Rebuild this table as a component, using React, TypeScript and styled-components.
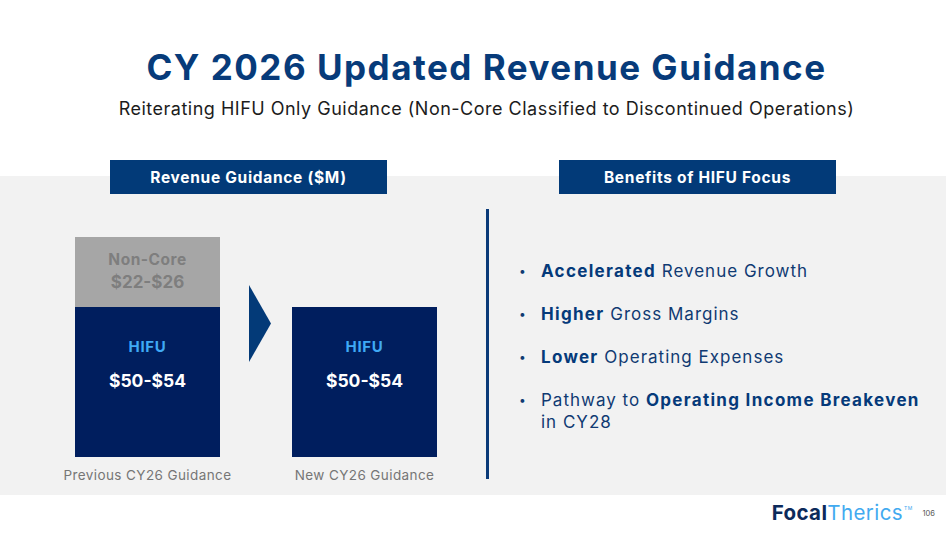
import React from "react";
import styled, { createGlobalStyle } from "styled-components";

const GlobalStyle = createGlobalStyle`
  html, body {
    margin: 0;
    padding: 0;
    background: #ffffff;
  }
  body {
    font-family: Inter, "Liberation Sans", sans-serif;
  }
`;

const Slide = styled.div`
  width: 946px;
  height: 535px;
  overflow: hidden;
  display: flex;
  flex-direction: column;
  background: #ffffff;
`;

const TitleBlock = styled.header`
  height: 160px;
  display: flex;
  flex-direction: column;
  align-items: center;
  padding-top: 45px;
  box-sizing: border-box;
`;

const Title = styled.h1`
  margin: 0 0 0 27px;
  font-size: 35px;
  line-height: 44px;
  font-weight: 700;
  color: #073b7a;
  letter-spacing: 1.5px;
`;

const Subtitle = styled.p`
  margin: 9px 0 0 27px;
  font-size: 18px;
  line-height: 22px;
  color: #1c1c1c;
  letter-spacing: 0.5px;
`;

const Content = styled.section`
  height: 335px;
  display: flex;
  flex-direction: column;
  background: linear-gradient(to bottom, #ffffff 16px, #f2f2f2 16px);
`;

const HeaderRow = styled.div`
  display: flex;
  height: 34px;
  padding-left: 110px;
  gap: 172px;
`;

const HeaderBox = styled.div`
  width: 277px;
  display: flex;
  align-items: center;
  justify-content: center;
  background: #023a78;
  color: #ffffff;
  font-weight: 700;
  font-size: 15.5px;
  letter-spacing: 0.7px;
`;

const Body = styled.div`
  flex: 1;
  display: flex;
`;

const ChartArea = styled.div`
  width: 486px;
  display: flex;
  padding: 43px 0 0 75px;
  box-sizing: border-box;
`;

const BarColumn = styled.div`
  width: 145px;
  display: flex;
  flex-direction: column;
  align-items: center;
`;

const Segment = styled.div<{ $h: number; $tone: "core" | "noncore" | "empty" }>`
  width: 100%;
  height: ${(p) => p.$h}px;
  display: flex;
  flex-direction: column;
  align-items: center;
  background: ${(p) =>
    p.$tone === "core" ? "#001e5e" : p.$tone === "noncore" ? "#a6a6a6" : "transparent"};
`;

const NonCoreName = styled.div`
  margin-top: 14px;
  font-size: 15.5px;
  line-height: 18px;
  font-weight: 700;
  color: #7e7e7e;
  letter-spacing: 0.5px;
`;

const NonCoreValue = styled.div`
  margin-top: 2px;
  font-size: 17px;
  line-height: 22px;
  font-weight: 700;
  color: #7e7e7e;
`;

const CoreName = styled.div`
  margin-top: 31px;
  font-size: 15px;
  line-height: 18px;
  font-weight: 700;
  color: #3fa9f5;
  letter-spacing: 0.7px;
`;

const CoreValue = styled.div`
  margin-top: 13px;
  font-size: 17.5px;
  line-height: 24px;
  font-weight: 700;
  color: #ffffff;
`;

const BarLabel = styled.div`
  margin-top: 9px;
  white-space: nowrap;
  font-size: 13.5px;
  line-height: 18px;
  color: #767676;
  letter-spacing: 0.4px;
`;

const Arrow = styled.svg`
  flex: none;
  margin: 48px 21px 0 29px;
`;

const Divider = styled.div`
  width: 3px;
  height: 270px;
  margin-top: 15px;
  background: #0a3a78;
`;

const BenefitList = styled.ul`
  list-style: none;
  margin: 0;
  padding: 66px 0 0 30px;
  display: flex;
  flex-direction: column;
  gap: 21px;
`;

const Benefit = styled.li`
  display: flex;
  font-size: 17px;
  line-height: 22px;
  color: #103a72;
  letter-spacing: 1px;
`;

const Dot = styled.span`
  width: 22px;
  flex: none;
  font-size: 12px;
  color: #103a72;
`;

const BenefitText = styled.p`
  margin: 0;
  width: 392px;
`;

const Strong = styled.b`
  font-weight: 700;
  color: #053a7a;
  letter-spacing: 1.3px;
`;

const Footer = styled.footer`
  flex: 1;
  display: flex;
  align-items: center;
  justify-content: flex-end;
  padding: 0 11px 4px 0;
`;

const Logo = styled.div`
  display: flex;
  align-items: flex-start;
  font-size: 20.5px;
  line-height: 24px;
  letter-spacing: 0.4px;
`;

const LogoBold = styled.span`
  font-weight: 700;
  color: #0c2a5b;
`;

const LogoLight = styled.span`
  font-weight: 400;
  color: #42aaf0;
`;

const Tm = styled.sup`
  font-size: 5px;
  line-height: 8px;
  color: #42aaf0;
  margin-left: 1px;
  margin-top: 3px;
`;

const PageNum = styled.span`
  margin-left: 10px;
  font-size: 7.5px;
  color: #555555;
`;

const bars = [
  { label: "Previous CY26 Guidance", nonCore: true },
  { label: "New CY26 Guidance", nonCore: false },
];

const benefits: React.ReactNode[] = [
  <>
    <Strong>Accelerated</Strong> Revenue Growth
  </>,
  <>
    <Strong>Higher</Strong> Gross Margins
  </>,
  <>
    <Strong>Lower</Strong> Operating Expenses
  </>,
  <>
    Pathway to <Strong>Operating Income Breakeven</Strong> in CY28
  </>,
];

function Bar(props: { label: string; nonCore: boolean }) {
  return (
    <BarColumn>
      {props.nonCore ? (
        <Segment $h={70} $tone="noncore">
          <NonCoreName>Non-Core</NonCoreName>
          <NonCoreValue>$22-$26</NonCoreValue>
        </Segment>
      ) : (
        <Segment $h={70} $tone="empty" />
      )}
      <Segment $h={150} $tone="core">
        <CoreName>HIFU</CoreName>
        <CoreValue>$50-$54</CoreValue>
      </Segment>
      <BarLabel>{props.label}</BarLabel>
    </BarColumn>
  );
}

export default function App() {
  return (
    <>
      <GlobalStyle />
      <Slide>
        <TitleBlock>
          <Title>CY 2026 Updated Revenue Guidance</Title>
          <Subtitle>Reiterating HIFU Only Guidance (Non-Core Classified to Discontinued Operations)</Subtitle>
        </TitleBlock>
        <Content>
          <HeaderRow>
            <HeaderBox>Revenue Guidance ($M)</HeaderBox>
            <HeaderBox>Benefits of HIFU Focus</HeaderBox>
          </HeaderRow>
          <Body>
            <ChartArea>
              <Bar {...bars[0]} />
              <Arrow width="22" height="77" viewBox="0 0 22 77">
                <polygon points="0,0 22,38.5 0,77" fill="#033a78" />
              </Arrow>
              <Bar {...bars[1]} />
            </ChartArea>
            <Divider />
            <BenefitList>
              {benefits.map((item, index) => (
                <Benefit key={index}>
                  <Dot>•</Dot>
                  <BenefitText>{item}</BenefitText>
                </Benefit>
              ))}
            </BenefitList>
          </Body>
        </Content>
        <Footer>
          <Logo>
            <LogoBold>Focal</LogoBold>
            <LogoLight>Therics</LogoLight>
            <Tm>TM</Tm>
          </Logo>
          <PageNum>106</PageNum>
        </Footer>
      </Slide>
    </>
  );
}
